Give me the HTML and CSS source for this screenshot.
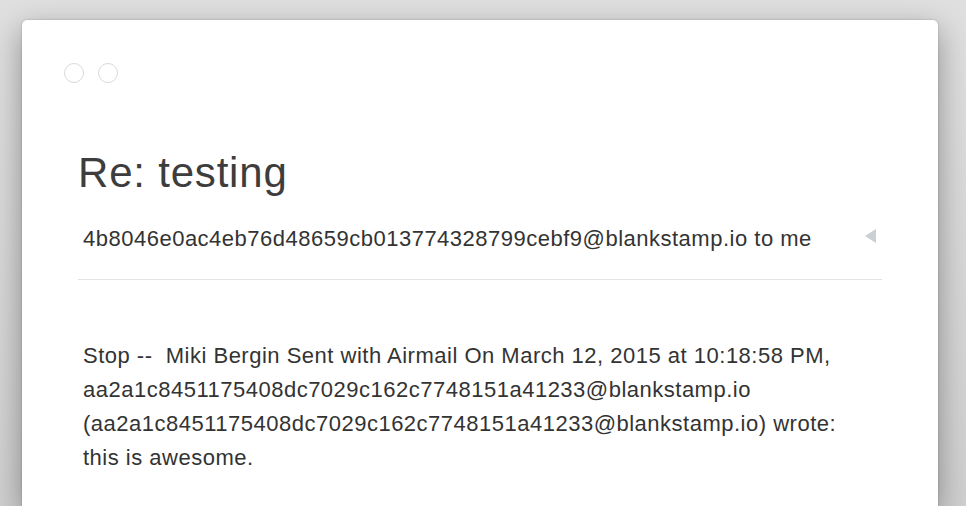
FILE: index.html
```html
<!DOCTYPE html>
<html lang="en">
<head>
    <meta charset="UTF-8">
    <title>Re: testing</title>
    <link rel="stylesheet" href="styles.css">
</head>
<body>
    <div class="window">
        <div class="window-controls">
            <span class="dot"></span>
            <span class="dot"></span>
        </div>

        <h1 class="subject">Re: testing</h1>

        <div class="sender-row">
            <span class="sender">4b8046e0ac4eb76d48659cb013774328799cebf9@blankstamp.io to me</span>
            <span class="toggle"></span>
        </div>

        <div class="message">
            <p>Stop --&nbsp; Miki Bergin Sent with Airmail On March 12, 2015 at 10:18:58 PM, aa2a1c8451175408dc7029c162c7748151a41233@blankstamp.io (aa2a1c8451175408dc7029c162c7748151a41233@blankstamp.io) wrote: this is awesome.</p>
        </div>
    </div>
</body>
</html>
```

FILE: styles.css
```css
/* page */
body {
    margin: 0;
    height: 506px;
    overflow: hidden;
    background: linear-gradient(180deg, #dfdfdf 0%, #cfcfcf 100%);
    font-family: "Liberation Sans", Arial, sans-serif;
    color: #333;
}

/* mail window */
.window {
    margin: 20px 28px 0 22px;
    height: 486px;
    background: #ffffff;
    border-radius: 5px 5px 0 0;
    box-shadow: 0 10px 30px rgba(0, 0, 0, 0.36), 0 0 2px rgba(0, 0, 0, 0.25);
    padding: 43px 56px 0 56px;
    box-sizing: border-box;
}

.window-controls {
    display: flex;
    gap: 14px;
    margin-left: -14px;
}

.dot {
    width: 18px;
    height: 18px;
    border: 1px solid #dadada;
    border-radius: 50%;
}

.subject {
    margin: 64px 0 0 0;
    font-size: 42px;
    font-weight: normal;
    color: #3d3d3d;
    letter-spacing: 0.8px;
    line-height: 52px;
}

.sender-row {
    display: flex;
    align-items: center;
    justify-content: space-between;
    margin-top: 28px;
    padding: 0 6px 28px 5px;
    border-bottom: 1px solid #e3e3e3;
}

.sender {
    font-size: 22px;
    letter-spacing: 0.5px;
    line-height: 24px;
}

.toggle {
    width: 0;
    height: 0;
    border-top: 7px solid transparent;
    border-bottom: 7px solid transparent;
    border-right: 11px solid #c9d0d3;
    margin-top: -6px;
}

.message {
    padding: 59px 28px 0 5px;
}

.message p {
    margin: 0;
    font-size: 22px;
    letter-spacing: 0.5px;
    line-height: 34px;
}
```
